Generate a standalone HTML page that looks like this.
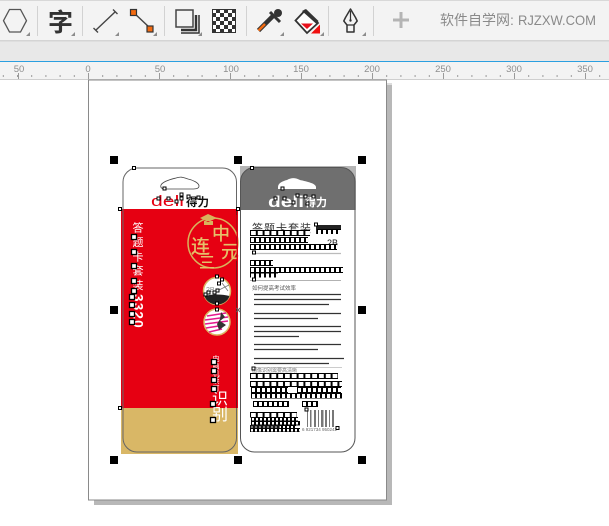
<!DOCTYPE html>
<html><head><meta charset="utf-8">
<style>
html,body{margin:0;padding:0;background:#fff}
body{width:609px;height:526px;overflow:hidden;position:relative;font-family:"Liberation Sans","Noto Sans CJK SC",sans-serif}
svg{position:absolute;left:0;top:0}
.v{position:absolute;writing-mode:vertical-rl;white-space:nowrap;color:#fff;line-height:1}
</style></head><body>
<svg width="609" height="526" viewBox="0 0 609 526" xmlns="http://www.w3.org/2000/svg" font-family="'Liberation Sans','Noto Sans CJK SC',sans-serif">
<defs>
<pattern id="chk" x="212" y="9" width="8" height="8" patternUnits="userSpaceOnUse"><rect width="8" height="8" fill="#333"/><rect width="4" height="4" fill="#fff"/><rect x="4" y="4" width="4" height="4" fill="#fff"/></pattern>
<pattern id="rt" x="88" width="14.2" height="4" patternUnits="userSpaceOnUse" y="75"><rect width="1" height="2" fill="#9a9a9a"/></pattern>
</defs>

<!-- toolbar -->
<rect width="609" height="41" fill="#f3f3f3"/>
<rect width="609" height="1" fill="#d8d8d8"/>
<rect y="40" width="609" height="1.5" fill="#d4d4d4"/>
<rect y="41.5" width="609" height="19.5" fill="#e8e8e8"/>
<rect y="61" width="609" height="1.2" fill="#2b9fe0"/>
<rect y="62" width="609" height="17" fill="#f3f3f3"/>
<rect y="79" width="609" height="1" fill="#cfcfcf"/>
<g fill="#d2d2d2"><rect x="37" y="6" width="1" height="30"/><rect x="82" y="6" width="1" height="30"/><rect x="164" y="6" width="1" height="30"/><rect x="246" y="6" width="1" height="30"/><rect x="328" y="6" width="1" height="30"/><rect x="373" y="6" width="1" height="30"/></g>
<g fill="#8c8c8c"><path d="M30 32v4h-4zM75 32v4h-4zM119 32v4h-4zM157 32v4h-4zM202 32v4h-4zM284 32v4h-4zM324 32v4h-4zM366 32v4h-4z"/></g>
<path d="M3.5 20.7L9.5 9.5H20.5L26.5 20.7L20.5 32H9.5Z" fill="none" stroke="#555" stroke-width="1.3"/>
<text x="48" y="31" font-size="25" font-weight="700" fill="#333" font-family="'Noto Sans CJK SC',sans-serif">字</text>
<path d="M96 30L115 12M93.5 28L98 32.5M113 9.500L117.5 14" fill="none" stroke="#444" stroke-width="1.4"/>
<path d="M133 12L150 28" stroke="#444" stroke-width="1.5"/>
<rect x="130.500" y="9.500" width="6" height="6" fill="#f26a10" stroke="#333" stroke-width="1.2"/>
<rect x="147" y="26" width="6" height="6" fill="#f26a10" stroke="#333" stroke-width="1.2"/>
<rect x="176" y="10" width="17" height="17" fill="none" stroke="#444" stroke-width="1.5"/>
<path d="M196 15V30H181" fill="none" stroke="#333" stroke-width="2.4"/>
<path d="M199 15V33H181" fill="none" stroke="#333" stroke-width="1.5"/>
<rect x="212" y="9" width="24" height="24" fill="url(#chk)"/>
<rect x="212.500" y="9.500" width="23" height="23" fill="none" stroke="#333"/>
<path d="M258.5 30.500L273 16" stroke="#333" stroke-width="4.5"/>
<path d="M258.5 30.500L265 24" stroke="#f26a10" stroke-width="2.5"/>
<path d="M270 12L280 22" stroke="#333" stroke-width="3"/>
<circle cx="278" cy="13" r="4" fill="#333"/>
<path d="M295.5 20.500L305 10.500L318 23L307 33Z" fill="#fff" stroke="#333" stroke-width="1.8"/>
<path d="M302 11L306 9L318.5 21L316.5 24Z" fill="#333"/>
<path d="M301 23.500H313L307 29Z" fill="#e8101c"/>
<path d="M320 24.500V33.500H311Z" fill="#f01010"/>
<path d="M350.5 9L345.500 17.500L343.800 21L347 25V32H354V25L357.200 21L355.500 17.500Z" fill="none" stroke="#333" stroke-width="1.5" stroke-linejoin="round"/>
<path d="M347 25H354M350.500 11V20" stroke="#333" stroke-width="1.2"/>
<circle cx="350.500" cy="20.500" r="1.200" fill="#333"/>
<path d="M401 12V28M393 20H409" stroke="#b4b4b4" stroke-width="3"/>
<text x="440" y="25" font-size="14" fill="#8a8a8a">软件自学网:</text>
<text x="518" y="25" font-size="14" fill="#8a8a8a" textLength="78" lengthAdjust="spacingAndGlyphs">RJZXW.COM</text>

<!-- ruler -->
<rect x="0" y="75" width="609" height="2" fill="url(#rt)"/>
<g fill="#9a9a9a"><rect x="18" y="73" width="1" height="6"/><rect x="88" y="73" width="1" height="6"/><rect x="159" y="73" width="1" height="6"/><rect x="230" y="73" width="1" height="6"/><rect x="372" y="73" width="1" height="6"/><rect x="443" y="73" width="1" height="6"/><rect x="514" y="73" width="1" height="6"/><rect x="585" y="73" width="1" height="6"/><rect x="301" y="73" width="1" height="6"/></g>
<g font-size="9.5" fill="#8e8e8e" text-anchor="middle"><text x="19" y="72">50</text><text x="88" y="72">0</text><text x="160" y="72">50</text><text x="231" y="72">100</text><text x="301" y="72">150</text><text x="372" y="72">200</text><text x="443" y="72">250</text><text x="514" y="72">300</text><text x="585" y="72">350</text></g>
<rect x="88" y="80" width="1" height="4" fill="#999"/>
<path d="M386.500 80V84H392" fill="none" stroke="#bbb"/>

<!-- page -->
<rect x="94" y="85" width="298" height="420" fill="#b8b8b8"/>
<rect x="88.500" y="80" width="298" height="420" fill="#fff" stroke="#8a8a8a"/>

<!-- front -->
<rect x="121" y="209" width="117" height="199" fill="#e60012"/>
<rect x="121" y="408" width="117" height="46" fill="#d9b766"/>
<rect x="123" y="168" width="113.500" height="284" rx="14" fill="none" stroke="#666" stroke-width="1"/>
<path d="M236.500 209V408" stroke="#7a0008" stroke-width="0.8"/>
<path d="M161 185C163 181 172 179 176 178C182 176 184 178 188 179C193 180 199 183 199 186C199 189 195 189 192 189H167C162 189 160 188 161 185Z" fill="none" stroke="#444" stroke-width="0.8"/>
<text x="151" y="206" font-size="15" fill="#e60012" textLength="33" lengthAdjust="spacingAndGlyphs">deli</text>
<text x="186" y="206" font-size="11.5" font-weight="700" fill="#111">得力</text>

<!-- medal -->
<circle cx="213" cy="243" r="25" fill="none" stroke="#d8b35c" stroke-width="1.5"/>
<path d="M200 218L208 214L217 218L208 222ZM204 221V225H213V221" fill="#d8b35c"/>
<g fill="#e5c06a" font-family="'Noto Sans CJK SC',sans-serif" font-weight="500">
<text x="191" y="253" font-size="19">连</text><text x="212" y="240" font-size="18">中</text><text x="221" y="258" font-size="18">元</text><text x="199" y="268" font-size="16">三</text>
</g>
<rect x="236.500" y="215" width="1.500" height="46" fill="#e60012"/>
<circle cx="217" cy="291" r="13.500" fill="#fff" stroke="#d9b766" stroke-width="1.5"/>
<path d="M204.500 296C212 294 222 294 229.500 296C228 301 223 304.500 217 304.500C211 304.500 206 301 204.500 296Z" fill="#222"/>
<text x="206" y="292" font-size="7" fill="#888">2B</text>
<path d="M219 290L229 285M222 283L228 291" stroke="#777" stroke-width="0.8"/>
<circle cx="217" cy="322" r="13" fill="#fff" stroke="#d9b766" stroke-width="1.5"/>
<path d="M207 316L226 313M205 320L228 317M205 324L228 321M206 328L225 325M209 332L222 329" stroke="#e5188f" stroke-width="1.5"/>
<path d="M221 312L225 317L220 321L226 325L219 330L217 324L220 319Z" fill="#333"/>
</svg>

<div class="v" style="left:131px;top:222px;font-size:11px;letter-spacing:3.3px">答题卡套装</div>
<div class="v" style="left:131px;top:294px;font-size:13.5px;font-weight:700;letter-spacing:1.2px">3320</div>
<div class="v" style="left:212px;top:355px;font-size:7px;letter-spacing:.3px">电脑机读可</div>
<div class="v" style="left:209px;top:390px;font-size:16px">识别</div>

<svg width="609" height="526" viewBox="0 0 609 526" xmlns="http://www.w3.org/2000/svg" font-family="'Liberation Sans','Noto Sans CJK SC',sans-serif">
<defs>
<pattern id="b7" width="6.8" height="6" patternUnits="userSpaceOnUse"><rect x=".5" y=".5" width="5.8" height="5" fill="#fff" stroke="#000"/></pattern>
<pattern id="b5" width="5" height="6" patternUnits="userSpaceOnUse"><rect x=".5" y=".5" width="4" height="5" fill="#fff" stroke="#000"/></pattern>
<pattern id="b4" width="4" height="4.500" patternUnits="userSpaceOnUse"><rect x=".5" y=".5" width="3" height="3.500" fill="#fff" stroke="#000"/></pattern>
</defs>
<!-- back -->
<rect x="240" y="166" width="116" height="44" fill="#b5b5b5"/>
<path d="M240.500 210V181.500A14 14 0 0 1 254.500 167.500H341A14 14 0 0 1 355 181.500V210Z" fill="#6f6f6f"/>
<rect x="240.500" y="167.500" width="114.500" height="284.500" rx="14" fill="none" stroke="#555" stroke-width="1"/>
<path d="M278 187C278 183 283 181 287 180C292 177 296 178 300 180C304 181 316 183 316 187V189H278Z" fill="#fff"/>
<text x="268" y="207" font-size="16" font-weight="700" fill="#fff" textLength="36" lengthAdjust="spacingAndGlyphs">deli</text>
<text x="305" y="206" font-size="11" font-weight="700" fill="#fff">得力</text>
<text x="252" y="232" font-size="11" fill="#333" letter-spacing="1">答题卡套装</text>
<rect x="316" y="225" width="25" height="9" fill="#222"/>
<text x="327" y="246" font-size="9" fill="#222">2B</text>
<path d="M252 253.500H341" stroke="#bbb" stroke-width="1.2"/>
<path d="M250 280.500H341" stroke="#999" stroke-width="0.8"/>
<text x="252" y="290" font-size="5.5" fill="#555">如何提高考试效率</text>
<g stroke="#333" stroke-width="1.300">
<path d="M254 294.500H341M254 299.500H341M254 304.500H329M254 313.500H341M254 318.500H318M254 326.500H341M254 331.500H341M254 336.500H299M254 344.500H341M254 349.500H318M254 358.500H344M254 363.500H329"/>
</g>
<path d="M252 367.500H342" stroke="#999" stroke-width="0.5"/>
<text x="252" y="372" font-size="5" fill="#777">图像识别需要高清晰</text>

<!-- outlined glyph box rows -->
<rect transform="translate(250,230)" width="60" height="6" fill="url(#b7)"/>
<rect transform="translate(317,229)" width="24" height="5" fill="url(#b5)"/>
<rect transform="translate(250,237)" width="58" height="6" fill="url(#b5)"/>
<rect transform="translate(250,244)" width="87" height="6" fill="url(#b5)"/>
<rect transform="translate(250,260)" width="23" height="6" fill="url(#b5)"/>
<rect transform="translate(250,267)" width="93" height="6" fill="url(#b5)"/>
<rect transform="translate(250,272.500)" width="28" height="5" fill="url(#b5)"/>
<rect transform="translate(250,373)" width="88" height="6" fill="url(#b7)"/>
<rect transform="translate(250,381)" width="92" height="6" fill="url(#b7)"/>
<rect transform="translate(251,387)" width="37" height="6" fill="url(#b5)"/>
<rect transform="translate(297,387)" width="44" height="6" fill="url(#b5)"/>
<rect transform="translate(251,393)" width="91" height="5.500" fill="url(#b5)"/>
<rect transform="translate(253,401)" width="36" height="6" fill="url(#b5)"/>
<rect transform="translate(302,401)" width="16" height="6" fill="url(#b5)"/>
<rect transform="translate(250,412)" width="47" height="5.500" fill="url(#b7)"/>
<rect transform="translate(251,417)" width="47" height="4.500" fill="url(#b4)"/>
<rect transform="translate(251,421)" width="49" height="4.500" fill="url(#b4)"/>
<rect transform="translate(250,425)" width="46" height="3.500" fill="url(#b4)"/>
<rect transform="translate(250,428)" width="50" height="4" fill="url(#b4)"/>
<rect x="250" y="425" width="30" height="3.500" fill="#222" opacity=".6"/>
<!-- barcode -->
<g fill="#777"><rect x="307" y="410" width="1" height="17"/><rect x="310" y="410" width="1.5" height="17"/><rect x="314" y="410" width="2" height="17"/><rect x="318" y="410" width="1" height="17"/><rect x="321" y="410" width="2.5" height="17"/><rect x="325" y="410" width="2" height="17"/><rect x="329" y="410" width="1" height="17"/><rect x="332" y="410" width="2" height="17"/></g>
<text x="302" y="431" font-size="4.5" fill="#666">6 921734 950242</text>

<!-- small white node handles -->
<g fill="#fff" stroke="#000" stroke-width="1">
<rect x="132.500" y="166.500" width="3" height="3"/><rect x="118.500" y="207.500" width="3" height="3"/><rect x="236.500" y="207.500" width="3" height="3"/><rect x="118.500" y="406.500" width="3" height="3"/><rect x="250.500" y="166.500" width="3" height="3"/>
<rect x="163" y="187" width="3" height="3"/><rect x="157" y="197" width="3" height="3"/><rect x="167" y="197" width="3" height="3"/><rect x="175" y="200" width="3" height="3"/><rect x="180" y="193" width="3" height="3"/><rect x="180" y="197" width="3" height="3"/><rect x="187" y="195" width="3" height="3"/><rect x="197" y="196" width="3" height="3"/>
<rect x="281" y="187" width="3" height="3"/><rect x="274" y="197" width="3" height="3"/><rect x="283" y="197" width="3" height="3"/><rect x="292" y="201" width="3" height="3"/><rect x="296" y="194" width="3" height="3"/><rect x="304" y="195" width="3" height="3"/><rect x="312" y="195" width="3" height="3"/><rect x="306" y="202" width="3" height="3"/>
<rect x="314.500" y="223" width="3" height="3"/><rect x="252.500" y="251" width="3" height="3"/><rect x="252.500" y="278" width="3" height="3"/><rect x="252" y="367" width="3" height="3"/><rect x="305" y="408" width="3" height="3"/><rect x="336" y="426.500" width="3" height="3"/>
<rect x="215.500" y="275" width="3" height="3"/><rect x="220.500" y="278" width="3" height="3"/><rect x="217.500" y="282" width="3" height="3"/><rect x="204" y="293" width="3" height="3"/><rect x="207" y="291" width="3" height="3"/><rect x="213" y="291" width="3" height="3"/><rect x="216" y="289" width="3" height="3"/><rect x="215.500" y="302" width="3" height="3"/><rect x="215.500" y="308" width="3" height="3"/>
</g>
<g fill="#fff" stroke="#000" stroke-width="1.3">
<rect x="131.500" y="234.500" width="5" height="5"/><rect x="131.500" y="249.500" width="5" height="5"/><rect x="131.500" y="263.500" width="5" height="5"/><rect x="131.500" y="278.500" width="5" height="5"/><rect x="131.500" y="288.500" width="5" height="5"/><rect x="129.500" y="294.500" width="5" height="5"/><rect x="129.500" y="302.500" width="5" height="5"/><rect x="129.500" y="311.500" width="5" height="5"/><rect x="129.500" y="319.500" width="5" height="5"/>
<rect x="211.500" y="359.500" width="5" height="5"/><rect x="211.500" y="368.500" width="5" height="5"/><rect x="211.500" y="377.500" width="5" height="5"/><rect x="211.500" y="386.500" width="5" height="5"/><rect x="210.500" y="401.500" width="5" height="5"/><rect x="210.500" y="417.500" width="5" height="5"/>
</g>
<!-- black selection handles -->
<g fill="#000">
<rect x="110" y="156" width="8" height="8"/><rect x="234" y="156" width="8" height="8"/><rect x="358" y="156" width="8" height="8"/>
<rect x="110" y="306" width="8" height="8"/><rect x="358" y="306" width="8" height="8"/>
<rect x="110" y="456" width="8" height="8"/><rect x="234" y="456" width="8" height="8"/><rect x="358" y="456" width="8" height="8"/>
</g>
<path d="M236.500 308L240 312M240 308L236.500 312" stroke="#666" stroke-width="1"/>
</svg>
</body></html>
